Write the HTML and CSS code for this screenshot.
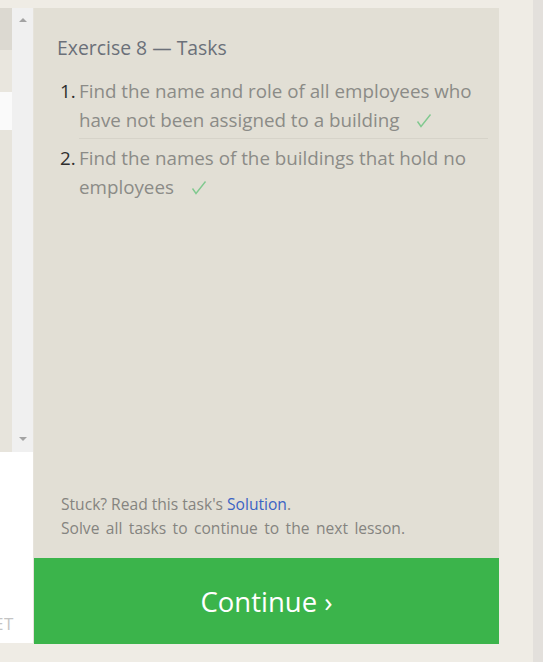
FILE: index.html
```html
<!DOCTYPE html>
<html>
<head>
<meta charset="utf-8">
<link rel="stylesheet" href="styles.css">
</head>
<body>
<div class="page">
  <div class="editor">
    <div class="editor-top">
      <div class="tabs">
        <div class="tab tab-dark"></div>
        <div class="tab tab-light"></div>
        <div class="tab tab-white"></div>
        <div class="tab tab-rest"></div>
      </div>
      <div class="scrollbar">
        <span class="arrow arrow-up"></span>
        <span class="arrow arrow-down"></span>
      </div>
    </div>
    <div class="editor-bottom">
      <span class="reset">ET</span>
    </div>
  </div>
  <div class="panel">
    <div class="tasks">
      <h2 class="title">Exercise 8 — Tasks</h2>
      <ol class="task-list">
        <li class="task"><span class="num">1.</span><span class="task-text">Find the name and role of all employees who have not been assigned to a building <svg class="check" width="16" height="15" viewBox="0 0 16 15"><polyline points="1.5,8.5 5,13.5 14.5,1.5" fill="none" stroke="#80c98f" stroke-width="1.4"/></svg></span></li>
        <li class="task"><span class="num">2.</span><span class="task-text">Find the names of the buildings that hold no employees <svg class="check" width="16" height="15" viewBox="0 0 16 15"><polyline points="1.5,8.5 5,13.5 14.5,1.5" fill="none" stroke="#80c98f" stroke-width="1.4"/></svg></span></li>
      </ol>
      <div class="footer-note">
        <p>Stuck? Read this task's <a class="link" href="#">Solution</a>.</p>
        <p class="wide">Solve all tasks to continue to the next lesson.</p>
      </div>
    </div>
    <div class="continue">Continue ›</div>
  </div>
  <div class="spacer"></div>
  <div class="edge"></div>
</div>
</body>
</html>
```

FILE: styles.css
```css
html, body {
  margin: 0;
  padding: 0;
}
body {
  background: #efece5;
  font-family: "Open Sans", "Noto Sans", sans-serif;
  width: 543px;
  height: 662px;
  overflow: hidden;
}
.page {
  display: flex;
  height: 662px;
  padding-top: 8px;
  box-sizing: border-box;
}
.editor {
  width: 33px;
  height: 635px;
  display: flex;
  flex-direction: column;
  border-right: 1px solid #e6e3db;
}
.editor-top {
  height: 444px;
  display: flex;
}
.tabs {
  width: 12px;
  display: flex;
  flex-direction: column;
}
.tab-dark { height: 42px; background: #dcd9d1; }
.tab-light { height: 42px; background: #e9e6de; }
.tab-white { height: 38px; background: #fafafa; }
.tab-rest { flex: 1; background: #e7e4dc; }
.scrollbar {
  width: 21px;
  background: #f0f0f0;
  display: flex;
  flex-direction: column;
  justify-content: space-between;
  align-items: center;
  padding: 10px 0 11px;
  box-sizing: border-box;
}
.arrow {
  width: 0;
  height: 0;
  border-left: 4px solid transparent;
  border-right: 4px solid transparent;
}
.arrow-up { border-bottom: 4px solid #a3a3a3; }
.arrow-down { border-top: 4px solid #a3a3a3; }
.editor-bottom {
  flex: 1;
  background: #ffffff;
  display: flex;
  align-items: flex-end;
  overflow: hidden;
}
.reset {
  font-size: 17px;
  color: #c4c4c4;
  margin-left: -6px;
  margin-bottom: 8px;
  letter-spacing: 0.5px;
}
.panel {
  width: 465px;
  height: 636px;
  display: flex;
  flex-direction: column;
  background: #e2dfd5;
}
.tasks {
  flex: 1;
  padding: 27px 11px 18px 23px;
  display: flex;
  flex-direction: column;
}
.title {
  margin: 0 0 16px;
  font-weight: 400;
  font-size: 19.4px;
  line-height: 26px;
  color: #6b7079;
}
.task-list {
  list-style: none;
  margin: 0;
  padding: 0;
}
.task {
  display: flex;
  font-size: 18.8px;
  line-height: 29px;
  padding: 0 0 3px;
}
.task + .task {
  border-top: 1px solid #d6d3c9;
  margin-left: 22px;
  padding-top: 5px;
}
.task + .task .num {
  margin-left: -22px;
}
.num {
  width: 22px;
  flex: none;
  color: #2e2e2e;
  padding-left: 3px;
  box-sizing: border-box;
}
.task-text {
  color: #8b8b87;
  padding-right: 8px;
}
.check {
  margin-left: 12px;
  vertical-align: -1px;
}
.footer-note {
  margin-top: auto;
  padding-left: 4px;
  font-size: 15.6px;
  line-height: 24px;
  color: #858480;
}
.footer-note p {
  margin: 0;
}
.footer-note .wide {
  word-spacing: 2.4px;
}
.link {
  color: #3b63c4;
  text-decoration: none;
}
.continue {
  height: 86px;
  background: #3bb44b;
  color: #ffffff;
  font-size: 27.5px;
  display: flex;
  align-items: center;
  justify-content: center;
}
.spacer {
  width: 34px;
}
.edge {
  width: 10px;
  background: #e3e0dc;
  margin-top: -8px;
  height: 662px;
}
```
